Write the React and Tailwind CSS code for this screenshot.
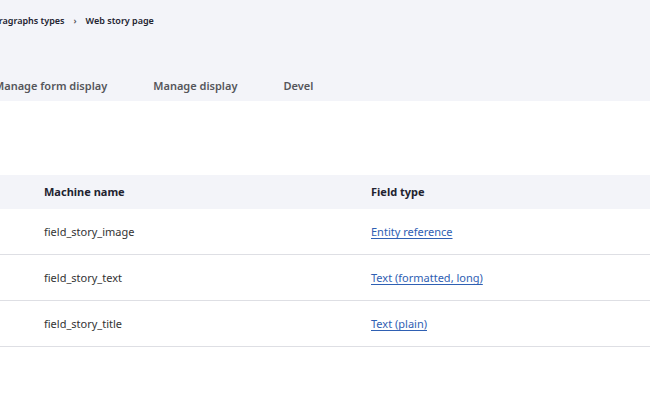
const ROWS = [
  { machine: 'field_story_image', type: 'Entity reference' },
  { machine: 'field_story_text', type: 'Text (formatted, long)' },
  { machine: 'field_story_title', type: 'Text (plain)' },
];

const TABS = ['Manage form display', 'Manage display', 'Devel'];

export default function App() {
  return (
    <div className="w-[650px] h-[400px] overflow-hidden bg-white font-['Noto_Sans',sans-serif]">
      <div className="h-[101px] bg-[#f3f4f9] flex flex-col">
        <nav className="h-[41px] flex items-center gap-[9px] -ml-[12px] text-[9px] font-semibold text-[#222330]">
          <span>Paragraphs types</span>
          <span className="text-[#55565b] text-[9px]">›</span>
          <span>Web story page</span>
        </nav>
        <div className="flex-1 flex items-end pb-[7px] -ml-[6px] gap-[46px] text-[11px] font-semibold text-[#55565b]">
          {TABS.map(tab => (
            <span key={tab} className="leading-[16px]">{tab}</span>
          ))}
        </div>
      </div>

      <div className="mt-[74px]">
        <div className="h-[34px] bg-[#f3f4f9] flex items-center text-[11px] font-bold text-[#222330]">
          <div className="w-[371px] pl-[44px]">Machine name</div>
          <div>Field type</div>
        </div>
        {ROWS.map(row => (
          <div
            key={row.machine}
            className="h-[46px] pt-[2px] border-b border-[#dedfe4] flex items-center text-[11px]"
          >
            <div className="w-[371px] pl-[44px] text-[#333]">{row.machine}</div>
            <a href="#" className="text-[#2f60b3] underline underline-offset-2">
              {row.type}
            </a>
          </div>
        ))}
      </div>
    </div>
  );
}
